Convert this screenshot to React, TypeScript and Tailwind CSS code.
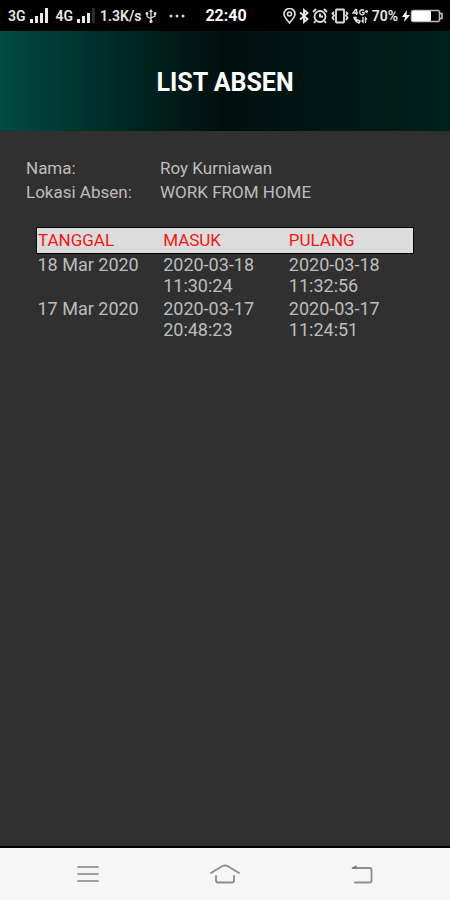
import React from 'react';

interface Attendance {
  date: string;
  checkIn: string[];
  checkOut: string[];
}

const records: Attendance[] = [
  {
    date: '18 Mar 2020',
    checkIn: ['2020-03-18', '11:30:24'],
    checkOut: ['2020-03-18', '11:32:56'],
  },
  {
    date: '17 Mar 2020',
    checkIn: ['2020-03-17', '20:48:23'],
    checkOut: ['2020-03-17', '11:24:51'],
  },
];

function Signal({ weak = false }: { weak?: boolean }) {
  return (
    <svg width="20" height="15" viewBox="0 0 20 15" fill="#e8e8e8">
      <rect x="0" y="11" width="3" height="4" />
      <rect x="5" y="8" width="3" height="7" />
      <rect x="10" y="5" width="3" height="10" />
      <rect x="15" y="0" width="3" height="15" fill={weak ? '#2a2a2a' : '#e8e8e8'} />
    </svg>
  );
}

function UsbIcon() {
  return (
    <svg width="12" height="14" viewBox="0 0 12 14" fill="none" stroke="#e0e0e0" strokeWidth="1.3">
      <path d="M6 2v10M2 5v2.5l4 2.5M10 5v2L6 9" />
      <path d="M6 0l2 3H4z" fill="#e0e0e0" stroke="none" />
      <circle cx="2" cy="4.5" r="1.4" fill="#e0e0e0" stroke="none" />
      <rect x="8.7" y="3.2" width="2.6" height="2.6" fill="#e0e0e0" stroke="none" />
      <circle cx="6" cy="12.4" r="1.6" fill="#e0e0e0" stroke="none" />
    </svg>
  );
}

function PinIcon() {
  return (
    <svg width="13" height="16" viewBox="0 0 13 16" fill="none" stroke="#e0e0e0" strokeWidth="1.6">
      <path d="M6.5 15C4 11.8 1 9 1 6a5.5 5.5 0 0 1 11 0c0 3-3 5.8-5.5 9z" />
      <circle cx="6.5" cy="6" r="2" />
    </svg>
  );
}

function BluetoothIcon() {
  return (
    <svg width="10" height="16" viewBox="0 0 10 16" fill="none" stroke="#e8e8e8" strokeWidth="1.9">
      <path d="M1 4.5l7.5 6.5L5 14V2l3.5 3L1 11.5" />
    </svg>
  );
}

function AlarmIcon() {
  return (
    <svg width="16" height="16" viewBox="0 0 16 16" fill="none" stroke="#e0e0e0" strokeWidth="1.8">
      <circle cx="8" cy="8.5" r="5.5" />
      <path d="M8 5.5v3h3M1 4l3-3M15 4l-3-3M3.5 13L2 15M12.5 13l1.5 2" />
    </svg>
  );
}

function VibrateIcon() {
  return (
    <svg width="18" height="16" viewBox="0 0 18 16" fill="none" stroke="#e0e0e0" strokeWidth="1.8">
      <rect x="5" y="1.5" width="8" height="13" rx="0.5" />
      <path d="M3 4L1.5 5.5 3 7.5 1.5 9.5 3 12M15 4l1.5 1.5L15 7.5l1.5 2L15 12" />
    </svg>
  );
}

function CallDataIcon() {
  return (
    <svg width="16" height="16" viewBox="0 0 16 16" fill="none" stroke="#e0e0e0" strokeWidth="1.4">
      <path d="M4 1L1 5h5M4.5 1v6M12 2.5A2.5 2.5 0 1 0 12 6V4.5h-2M13 3.5h3M14.5 2v3" />
      <path d="M2 9.5c1 3 2.5 4.5 5 5.5l1-2-2-1-1 .5-1.5-2 .5-1zM11 9v5l-1.5-1.5M13.5 15v-5l1.5 1.5" />
    </svg>
  );
}

function BatteryIcon() {
  return (
    <svg width="42" height="14" viewBox="0 0 42 14" fill="none">
      <path d="M5 1L0 8h3l-1 5 6-7H4.5z" fill="#fff" />
      <rect x="9.5" y="1.5" width="28" height="11" rx="2" stroke="#bdbdbd" strokeWidth="1.5" />
      <rect x="10" y="2" width="19" height="10" rx="1" fill="#fff" />
      <path d="M38 4.5h2v5h-2" stroke="#c8c8c8" strokeWidth="1.5" />
    </svg>
  );
}

function StatusBar() {
  return (
    <div className="grid h-[31px] grid-cols-[1fr_auto_1fr] items-center bg-black pl-2 pr-1.5 text-sm font-semibold text-[#e8e8e8]">
      <div className="flex items-center">
        <span className="mr-1">3G</span>
        <Signal />
        <span className="ml-1.5 mr-1">4G</span>
        <Signal weak />
        <span className="ml-[3px] mr-1">1.3K/s</span>
        <UsbIcon />
        <svg className="ml-3" width="16" height="4" viewBox="0 0 16 4" fill="#d8d8d8">
          <circle cx="2" cy="2" r="1.5" />
          <circle cx="8" cy="2" r="1.5" />
          <circle cx="14" cy="2" r="1.5" />
        </svg>
      </div>
      <span className="text-base font-bold text-white">22:40</span>
      <div className="flex items-center justify-end gap-[3px]">
        <PinIcon />
        <BluetoothIcon />
        <AlarmIcon />
        <VibrateIcon />
        <CallDataIcon />
        <span className="mx-px">70%</span>
        <BatteryIcon />
      </div>
    </div>
  );
}

function NavBar() {
  return (
    <nav className="grid h-[54px] grid-cols-3 items-center border-t-2 border-black bg-[#f6f6f6] px-5">
      <button aria-label="Menu" className="flex justify-center">
        <svg width="22" height="18" viewBox="0 0 22 18" stroke="#a0a0a0" strokeWidth="2" strokeLinecap="round">
          <path d="M1 2h20M1 9h20M1 16h20" />
        </svg>
      </button>
      <button aria-label="Home" className="flex justify-center">
        <svg width="30" height="20" viewBox="0 0 30 20" fill="none" stroke="#8c8c8c" strokeWidth="1.8" strokeLinecap="round" strokeLinejoin="round">
          <path d="M1 9L12.5 2Q15 1 17.5 2L29 9" />
          <path d="M6 12v4.5Q6 18.5 8 18.5h14q2 0 2-2V12" />
        </svg>
      </button>
      <button aria-label="Back" className="flex justify-center">
        <svg width="22" height="20" viewBox="0 0 22 20" fill="none" stroke="#8c8c8c" strokeWidth="1.8" strokeLinecap="round">
          <path d="M2 4h16.500q2 0 2 2v10.500q0 2-2 2H4" />
          <path d="M0 4.5L5.5 1v3.5z" fill="#777" stroke="none" />
        </svg>
      </button>
    </nav>
  );
}

export default function App() {
  return (
    <div className="flex min-h-screen flex-col bg-[#303030] font-['Roboto',sans-serif]">
      <StatusBar />
      <header className="flex h-[100px] items-center justify-center bg-linear-to-r from-[#004b43] via-[#000f0e] to-[#00211e] pt-1">
        <h1 className="text-[25px] font-bold text-white">LIST ABSEN</h1>
      </header>

      <main className="flex-1 text-lg/[21px] text-[#bdbdbd]">
        <dl className="grid grid-cols-[134px_1fr] gap-y-[3px] px-[26px] pt-[27px] text-[17px]/[21px]">
          <dt>Nama:</dt>
          <dd>Roy Kurniawan</dd>
          <dt>Lokasi Absen:</dt>
          <dd>WORK FROM HOME</dd>
        </dl>

        <table className="mx-9 mt-6 w-[calc(100%-72px)] table-fixed border-collapse text-left">
          <thead>
            <tr className="border border-black bg-[#dcdcdc] text-[17px]/[21px] text-[#f01818]">
              <th className="px-px py-0.5 font-normal">TANGGAL</th>
              <th className="px-px py-0.5 font-normal">MASUK</th>
              <th className="px-px py-0.5 font-normal">PULANG</th>
            </tr>
          </thead>
          <tbody>
            {records.map((record) => (
              <tr key={record.date} className="align-top">
                <td className="px-px pb-0.5">{record.date}</td>
                {[record.checkIn, record.checkOut].map(([day, time], index) => (
                  <td key={index} className="px-px pb-0.5">
                    {day}
                    <br />
                    {time}
                  </td>
                ))}
              </tr>
            ))}
          </tbody>
        </table>
      </main>

      <NavBar />
    </div>
  );
}
